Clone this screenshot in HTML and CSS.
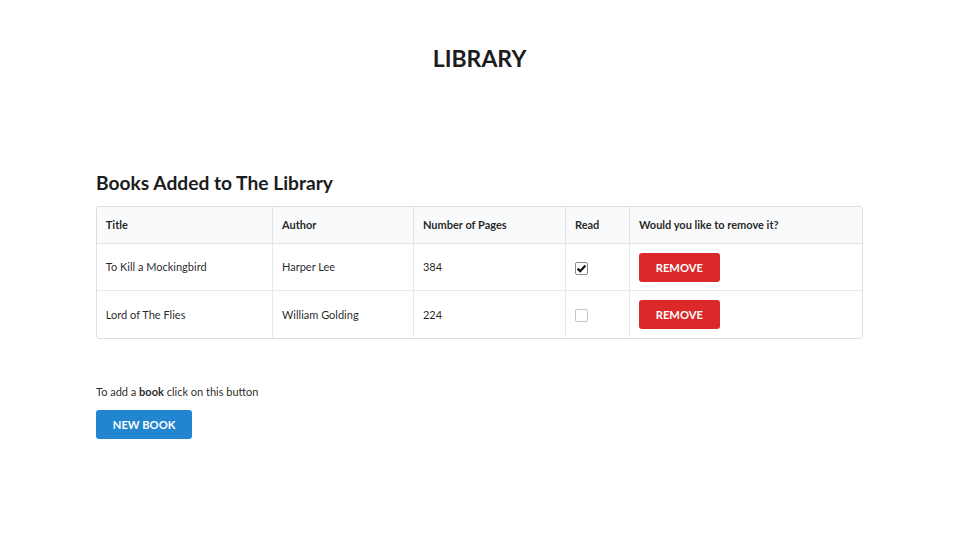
FILE: index.html
```html
<!DOCTYPE html>
<html>
<head>
<meta charset="utf-8">
<link rel="stylesheet" href="styles.css">
</head>
<body>
<div class="page">
  <h1 class="title">LIBRARY</h1>
  <section class="library">
    <h2 class="subtitle">Books Added to The Library</h2>
    <table class="books">
      <thead>
        <tr>
          <th class="c-title">Title</th>
          <th class="c-author">Author</th>
          <th class="c-pages">Number of Pages</th>
          <th class="c-read">Read</th>
          <th class="c-remove">Would you like to remove it?</th>
        </tr>
      </thead>
      <tbody>
        <tr>
          <td>To Kill a Mockingbird</td>
          <td>Harper Lee</td>
          <td>384</td>
          <td><span class="check checked"><svg viewBox="0 0 13 13" width="13" height="13"><path d="M2.6 6.6 L5.2 9.2 L10.4 3.6" fill="none" stroke="#111" stroke-width="2.2" stroke-linejoin="miter"/></svg></span></td>
          <td><button class="btn btn-red">REMOVE</button></td>
        </tr>
        <tr>
          <td>Lord of The Flies</td>
          <td>William Golding</td>
          <td>224</td>
          <td><span class="check"></span></td>
          <td><button class="btn btn-red">REMOVE</button></td>
        </tr>
      </tbody>
    </table>
  </section>
  <section class="add">
    <p class="hint">To add a <b>book</b> click on this button</p>
    <button class="btn btn-blue">NEW BOOK</button>
  </section>
</div>
</body>
</html>
```
FILE: styles.css
```css
html, body {
  margin: 0;
  padding: 0;
  background: #ffffff;
}
body {
  font-family: Lato, "Helvetica Neue", Arial, sans-serif;
  font-size: 11px;
  line-height: 16px;
  color: rgba(0, 0, 0, 0.87);
}
.page {
  width: 767px;
  margin: 0 0 0 96px;
}
.title {
  margin: 0;
  padding-top: 44px;
  text-align: center;
  font-size: 23px;
  line-height: 28px;
  font-weight: 700;
  color: #1b1c1d;
}
.library {
  margin-top: 99px;
}
.subtitle {
  margin: 0 0 11px 0;
  font-size: 19.2px;
  line-height: 24px;
  font-weight: 700;
  color: #1b1c1d;
}
.books {
  width: 100%;
  border-collapse: separate;
  border-spacing: 0;
  border: 1px solid rgba(34, 36, 38, 0.15);
  border-radius: 3px;
  text-align: left;
}
.books th {
  background: #f9fafb;
  font-weight: 700;
  padding: 10px 8.8px 10px 9.4px;
  border-bottom: 1px solid rgba(34, 36, 38, 0.1);
  border-left: 1px solid rgba(34, 36, 38, 0.1);
  line-height: 16px;
}
.books th:first-child { border-left: none; border-top-left-radius: 3px; padding-left: 8.8px; }
.books th:last-child { border-top-right-radius: 3px; }
.books td {
  padding: 8.8px 8.8px 8.8px 9.4px;
  border-left: 1px solid rgba(34, 36, 38, 0.1);
  border-top: 1px solid rgba(34, 36, 38, 0.1);
  line-height: 16px;
  height: 28.8px;
}
.books tbody tr:first-child td { border-top: none; }
.books td:first-child { border-left: none; padding-left: 8.8px; }
.c-title { width: 157px; }
.c-author { width: 121.8px; }
.c-pages { width: 132.8px; }
.c-read { width: 44.8px; }

.check {
  display: inline-block;
  box-sizing: border-box;
  width: 13px;
  height: 13px;
  border: 1px solid #c4c4c4;
  border-radius: 2px;
  background: #fff;
  vertical-align: middle;
  position: relative;
}
.check.checked { border-color: #8a8a8a; }
.check svg {
  position: absolute;
  left: -1px;
  top: -1px;
}
.btn {
  border: none;
  border-radius: 3px;
  font-family: Lato, "Helvetica Neue", Arial, sans-serif;
  font-size: 11.2px;
  font-weight: 700;
  line-height: 11.2px;
  padding: 8.8px 16.8px;
  color: #fff;
  cursor: pointer;
  vertical-align: middle;
}
.btn-red { background: #db2828; }
.btn-blue { background: #2185d0; }
.add {
  margin-top: 45px;
}
.hint {
  margin: 0 0 10px 0;
  line-height: 16px;
}
.hint b { font-weight: 700; }
```
